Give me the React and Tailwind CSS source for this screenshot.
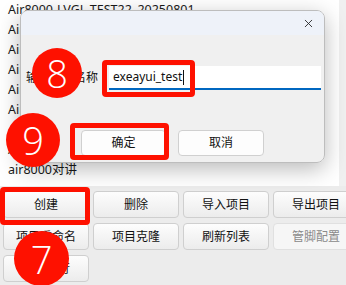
import React from "react";
import { X } from "lucide-react";

const rows = [
  "Air8000-LVGL-TEST22_20250801",
  "Air8000-demo",
  "Air8000-gps",
  "Air8000-uart",
  "Air8000-tts",
  "Air8000-lcd",
  "Air8000-mqtt",
  "Air8000-fota",
  "air8000对讲",
];

const font = "font-['Segoe_UI','Noto_Sans','Noto_Sans_CJK_SC',sans-serif]";

const ToolButton = ({ label, disabled }) => (
  <button
    className={`h-[27px] rounded-[4px] border text-[12px] ${
      disabled
        ? "border-[#e0e0e0] bg-[#f6f6f6] text-[#8a8a8a]"
        : "border-[#cfcfcf] bg-gradient-to-b from-[#fdfdfd] to-[#ececec] text-[#111]"
    }`}
  >
    {label}
  </button>
);

const Badge = ({ n, className }) => (
  <div
    className={`absolute flex items-center justify-center rounded-full bg-[#fe1100] text-white text-[38px] leading-none font-light font-['Open_Sans',sans-serif] ${className}`}
  >
    {n}
  </div>
);

const App = () => {
  return (
    <div className={`relative w-[346px] h-[285px] overflow-hidden bg-[#e6e6e6] ${font}`}>
      {/* project list */}
      <div className="flex h-[186px] bg-white">
        <div className="flex-1 flex flex-col">
          {rows.map((r) => (
            <div key={r} className="h-[20px] leading-[20px] pl-[8px] text-[12.5px] text-[#1a1a1a] whitespace-nowrap">
              {r}
            </div>
          ))}
        </div>
        <div className="w-[7px] bg-[#f0f0f0]" />
      </div>

      {/* toolbar */}
      <div className="grid grid-cols-[86px_86px_86px_86px] gap-x-[4px] gap-y-[5px] pl-[3px] pt-[5px] bg-[#ececec] pb-[3px]">
        <ToolButton label="创建" />
        <ToolButton label="删除" />
        <ToolButton label="导入项目" />
        <ToolButton label="导出项目" />
        <ToolButton label="项目重命名" />
        <ToolButton label="项目克隆" />
        <ToolButton label="刷新列表" />
        <ToolButton label="管脚配置" disabled />
        <ToolButton label="模拟运行" />
      </div>

      {/* shadow under dialog */}
      <div className="absolute left-[20px] top-[10px] w-[305px] h-[153px] rounded-[8px] shadow-[0_6px_22px_rgba(0,0,0,0.28)]" />

      {/* dialog */}
      <div className="absolute left-[20px] top-[10px] w-[305px] h-[153px] rounded-[8px] border border-[#bdbdbd] bg-[#f0f0f0] overflow-hidden flex flex-col">
        <div className="h-[24px] bg-[#eef2f9] flex items-center justify-end pr-[9px]">
          <X className="w-[13px] h-[13px] text-[#222]" strokeWidth={1.6} />
        </div>
        <div className="flex items-center mt-[31px] pl-[5px]">
          <div className="w-[83px] text-[12px] text-[#111]">输入项目名称</div>
          <div className="w-[212px] h-[24px] bg-white border-b-2 border-[#0067c0] flex items-center pl-[4px] text-[12px] text-[#111]">
            exeayui_test
            <span className="ml-[1px] w-[1px] h-[15px] bg-[#111]" />
          </div>
        </div>
        <div className="flex gap-[12px] pl-[60px] mt-[40px]">
          <button className="w-[85px] h-[26px] rounded-[4px] border border-[#d0d0d0] bg-[#fdfdfd] text-[12px] text-[#111]">
            确定
          </button>
          <button className="w-[86px] h-[26px] rounded-[4px] border border-[#d0d0d0] bg-[#fdfdfd] text-[12px] text-[#111]">
            取消
          </button>
        </div>
      </div>

      {/* annotation boxes */}
      <div className="absolute left-[102px] top-[60px] w-[93px] h-[37px] rounded-[4px] border-[5px] border-[#fe1100]" />
      <div className="absolute left-[70px] top-[123px] w-[99px] h-[37px] rounded-[4px] border-[5px] border-[#fe1100]" />
      <div className="absolute left-[0px] top-[187px] w-[90px] h-[38px] rounded-[4px] border-[5px] border-[#fe1100]" />

      {/* annotation numbers */}
      <Badge n="8" className="left-[32px] top-[48px] w-[50px] h-[50px]" />
      <Badge n="9" className="left-[6px] top-[113px] w-[54px] h-[54px]" />
      <Badge n="7" className="left-[14px] top-[231px] w-[55px] h-[55px]" />
    </div>
  );
};

export default App;
